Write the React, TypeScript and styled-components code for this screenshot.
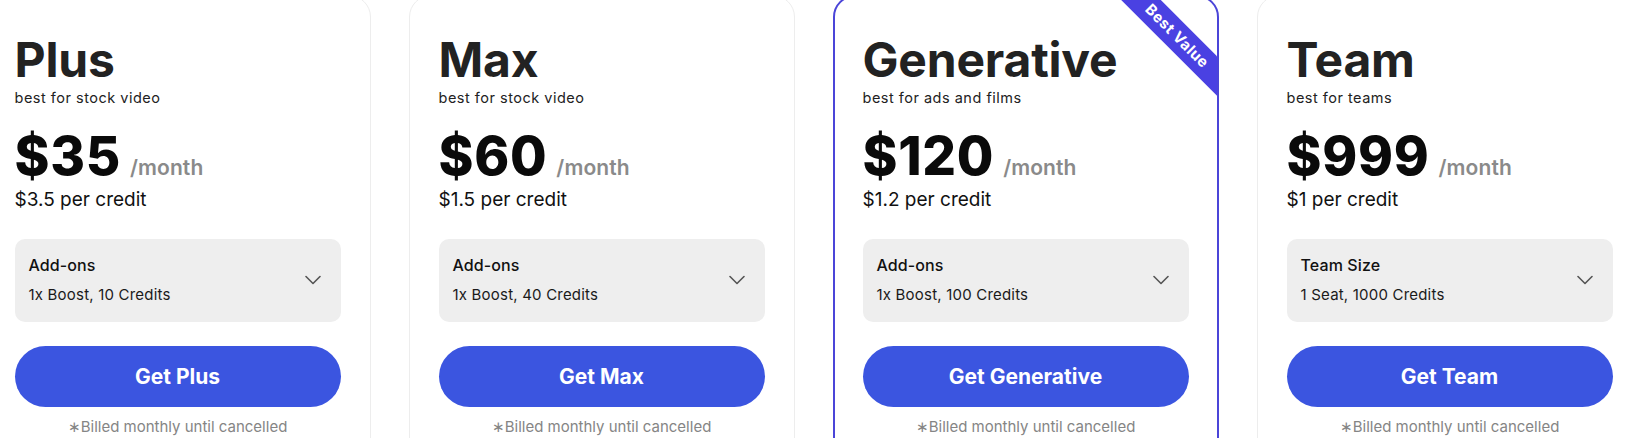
import React from "react";
import styled, { createGlobalStyle } from "styled-components";

const GlobalStyle = createGlobalStyle`
  html, body {
    margin: 0;
    padding: 0;
    background: #ffffff;
    overflow: hidden;
  }
  body {
    font-family: Inter, "Noto Sans", "Liberation Sans", sans-serif;
    color: #222222;
    -webkit-font-smoothing: antialiased;
  }
  * { box-sizing: border-box; }
`;

const Page = styled.div`
  width: 1627px;
  height: 438px;
  overflow: hidden;
`;

const Row = styled.div`
  display: flex;
  justify-content: center;
  gap: 38px;
  margin-top: -5px;
`;

const Card = styled.div<{ $featured?: boolean }>`
  position: relative;
  overflow: hidden;
  flex: 0 0 386px;
  width: 386px;
  height: 480px;
  border-radius: 22px;
  background: #ffffff;
  border: ${(p) => (p.$featured ? "2px solid #4b45d8" : "1px solid #ededed")};
  padding: ${(p) => (p.$featured ? "35px 28px 0" : "36px 29px 0")};
  display: flex;
  flex-direction: column;
`;

const Ribbon = styled.div`
  position: absolute;
  top: 24.5px;
  right: -60px;
  width: 200px;
  height: 28px;
  background: #4a41e2;
  color: #ffffff;
  font-size: 15px;
  font-weight: 700;
  letter-spacing: 0.5px;
  line-height: 28px;
  text-align: center;
  transform: rotate(45deg);
`;

const Title = styled.h2`
  margin: 0;
  font-size: 48px;
  line-height: 56px;
  font-weight: 700;
  color: #222222;
  letter-spacing: -0.2px;
`;

const Subtitle = styled.div`
  font-size: 14.5px;
  line-height: 20px;
  letter-spacing: 0.5px;
  color: #222222;
`;

const PriceRow = styled.div`
  margin-top: 16px;
  display: flex;
  align-items: baseline;
  gap: 9px;
  height: 64px;
`;

const Price = styled.span`
  font-size: 53px;
  line-height: 64px;
  font-weight: 800;
  color: #0a0a0a;
  letter-spacing: 0.7px;
`;

const Period = styled.span`
  font-size: 21px;
  line-height: 24px;
  font-weight: 600;
  color: #8a8a8a;
  letter-spacing: 0.1px;
`;

const PerCredit = styled.div`
  font-size: 19px;
  line-height: 24px;
  color: #111111;
`;

const Select = styled.div`
  margin-top: 27px;
  height: 83px;
  border-radius: 10px;
  background: #eeeeee;
  padding: 15px 20px 17px 14px;
  display: flex;
  align-items: center;
  justify-content: space-between;
`;

const SelectText = styled.div`
  display: flex;
  flex-direction: column;
  gap: 9px;
`;

const SelectLabel = styled.div`
  font-size: 16px;
  line-height: 22px;
  font-weight: 500;
  color: #111111;
  letter-spacing: 0.1px;
`;

const SelectValue = styled.div`
  font-size: 15px;
  line-height: 20px;
  color: #1a1a1a;
  letter-spacing: 0.2px;
`;

const Chevron = styled.svg`
  width: 16px;
  height: 10px;
  flex: 0 0 auto;
  margin-top: 1px;
`;

const Button = styled.button`
  margin-top: 24px;
  height: 61px;
  width: 100%;
  border: none;
  border-radius: 31px;
  background: #3b55e0;
  color: #ffffff;
  font-family: inherit;
  font-size: 21px;
  line-height: 24px;
  font-weight: 700;
  cursor: pointer;
`;

const Note = styled.div`
  margin-top: 10px;
  font-size: 15px;
  line-height: 20px;
  color: #858585;
  text-align: center;
`;

type Plan = {
  name: string;
  subtitle: string;
  price: string;
  perCredit: string;
  label: string;
  value: string;
  featured?: boolean;
};

const plans: Plan[] = [
  {
    name: "Plus",
    subtitle: "best for stock video",
    price: "$35",
    perCredit: "$3.5 per credit",
    label: "Add-ons",
    value: "1x Boost, 10 Credits",
  },
  {
    name: "Max",
    subtitle: "best for stock video",
    price: "$60",
    perCredit: "$1.5 per credit",
    label: "Add-ons",
    value: "1x Boost, 40 Credits",
  },
  {
    name: "Generative",
    subtitle: "best for ads and films",
    price: "$120",
    perCredit: "$1.2 per credit",
    label: "Add-ons",
    value: "1x Boost, 100 Credits",
    featured: true,
  },
  {
    name: "Team",
    subtitle: "best for teams",
    price: "$999",
    perCredit: "$1 per credit",
    label: "Team Size",
    value: "1 Seat, 1000 Credits",
  },
];

function PlanCard({ plan }: { plan: Plan }) {
  return (
    <Card $featured={plan.featured}>
      {plan.featured && <Ribbon>Best Value</Ribbon>}
      <Title>{plan.name}</Title>
      <Subtitle>{plan.subtitle}</Subtitle>
      <PriceRow>
        <Price>{plan.price}</Price>
        <Period>/month</Period>
      </PriceRow>
      <PerCredit>{plan.perCredit}</PerCredit>
      <Select>
        <SelectText>
          <SelectLabel>{plan.label}</SelectLabel>
          <SelectValue>{plan.value}</SelectValue>
        </SelectText>
        <Chevron viewBox="0 0 16 10" fill="none">
          <polyline
            points="1,1.5 8,8.5 15,1.5"
            stroke="#555555"
            strokeWidth="1.6"
            strokeLinecap="round"
            strokeLinejoin="round"
          />
        </Chevron>
      </Select>
      <Button>Get {plan.name}</Button>
      <Note>∗Billed monthly until cancelled</Note>
    </Card>
  );
}

export default function App() {
  return (
    <Page>
      <GlobalStyle />
      <Row>
        {plans.map((p) => (
          <PlanCard key={p.name} plan={p} />
        ))}
      </Row>
    </Page>
  );
}
